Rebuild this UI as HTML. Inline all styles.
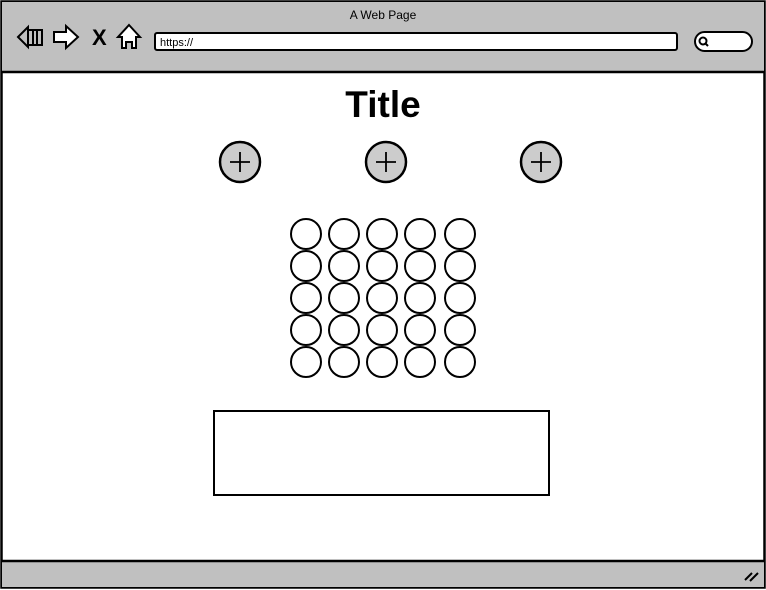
<!DOCTYPE html>
<html><head><style>
html,body{margin:0;padding:0;background:#fff;}
svg{display:block;}
text{font-family:"Liberation Sans",sans-serif;}
</style></head><body>
<svg width="766" height="590" viewBox="0 0 766 590" xmlns="http://www.w3.org/2000/svg">
<rect x="1.5" y="1.5" width="763" height="586" fill="#fff" stroke="#000" stroke-width="2.5"/>
<rect x="2" y="2" width="762" height="70" fill="#c0c0c0"/>
<line x1="2" y1="72" x2="764" y2="72" stroke="#000" stroke-width="2.5"/>
<rect x="2" y="562" width="762" height="25" fill="#c0c0c0"/>
<line x1="2" y1="561" x2="764" y2="561" stroke="#000" stroke-width="2.5"/>
<path d="M745 580 L752 573 M750 581 L758 573" stroke="#000" stroke-width="2"/>
<text x="383" y="19" font-size="12" text-anchor="middle">A Web Page</text>
<path d="M18 37 L28 27 L28 47 Z M28 30 H42 V45 H28 M33 30 V45 M37 30 V45" fill="none" stroke="#000" stroke-width="2"/>
<path d="M54 32 H66 V26 L78 37 L66 48 V42 H54 Z" fill="#fff" stroke="#000" stroke-width="2"/>
<text x="92" y="45" font-size="22" font-weight="bold">X</text>
<path d="M129 25 L140 37 H136 V48 H132 V42 H126 V48 H122 V37 H118 Z" fill="#fff" stroke="#000" stroke-width="2"/>
<rect x="155" y="33" width="522" height="17" rx="2" fill="#fff" stroke="#000" stroke-width="2"/>
<text x="160" y="46" font-size="11">https://</text>
<rect x="695" y="32" width="57" height="19" rx="9.5" fill="#fff" stroke="#000" stroke-width="2"/>
<circle cx="703" cy="41" r="3.5" fill="none" stroke="#000" stroke-width="2"/>
<line x1="705" y1="43" x2="708" y2="46" stroke="#000" stroke-width="2"/>
<text x="383" y="117" font-size="37" font-weight="bold" text-anchor="middle">Title</text>
<g fill="#ccc" stroke="#000" stroke-width="2.5">
<circle cx="240" cy="162" r="20"/><circle cx="386" cy="162" r="20"/><circle cx="541" cy="162" r="20"/>
</g>
<g stroke="#000" stroke-width="1.8">
<path d="M230 162H250M240 152V172M376 162H396M386 152V172M531 162H551M541 152V172"/>
</g>
<g fill="#fff" stroke="#000" stroke-width="2">
<circle cx="306" cy="234" r="15"/><circle cx="344" cy="234" r="15"/><circle cx="382" cy="234" r="15"/><circle cx="420" cy="234" r="15"/><circle cx="460" cy="234" r="15"/>
<circle cx="306" cy="266" r="15"/><circle cx="344" cy="266" r="15"/><circle cx="382" cy="266" r="15"/><circle cx="420" cy="266" r="15"/><circle cx="460" cy="266" r="15"/>
<circle cx="306" cy="298" r="15"/><circle cx="344" cy="298" r="15"/><circle cx="382" cy="298" r="15"/><circle cx="420" cy="298" r="15"/><circle cx="460" cy="298" r="15"/>
<circle cx="306" cy="330" r="15"/><circle cx="344" cy="330" r="15"/><circle cx="382" cy="330" r="15"/><circle cx="420" cy="330" r="15"/><circle cx="460" cy="330" r="15"/>
<circle cx="306" cy="362" r="15"/><circle cx="344" cy="362" r="15"/><circle cx="382" cy="362" r="15"/><circle cx="420" cy="362" r="15"/><circle cx="460" cy="362" r="15"/>
</g>
<rect x="214" y="411" width="335" height="84" fill="#fff" stroke="#000" stroke-width="2"/>
</svg>
</body></html>
